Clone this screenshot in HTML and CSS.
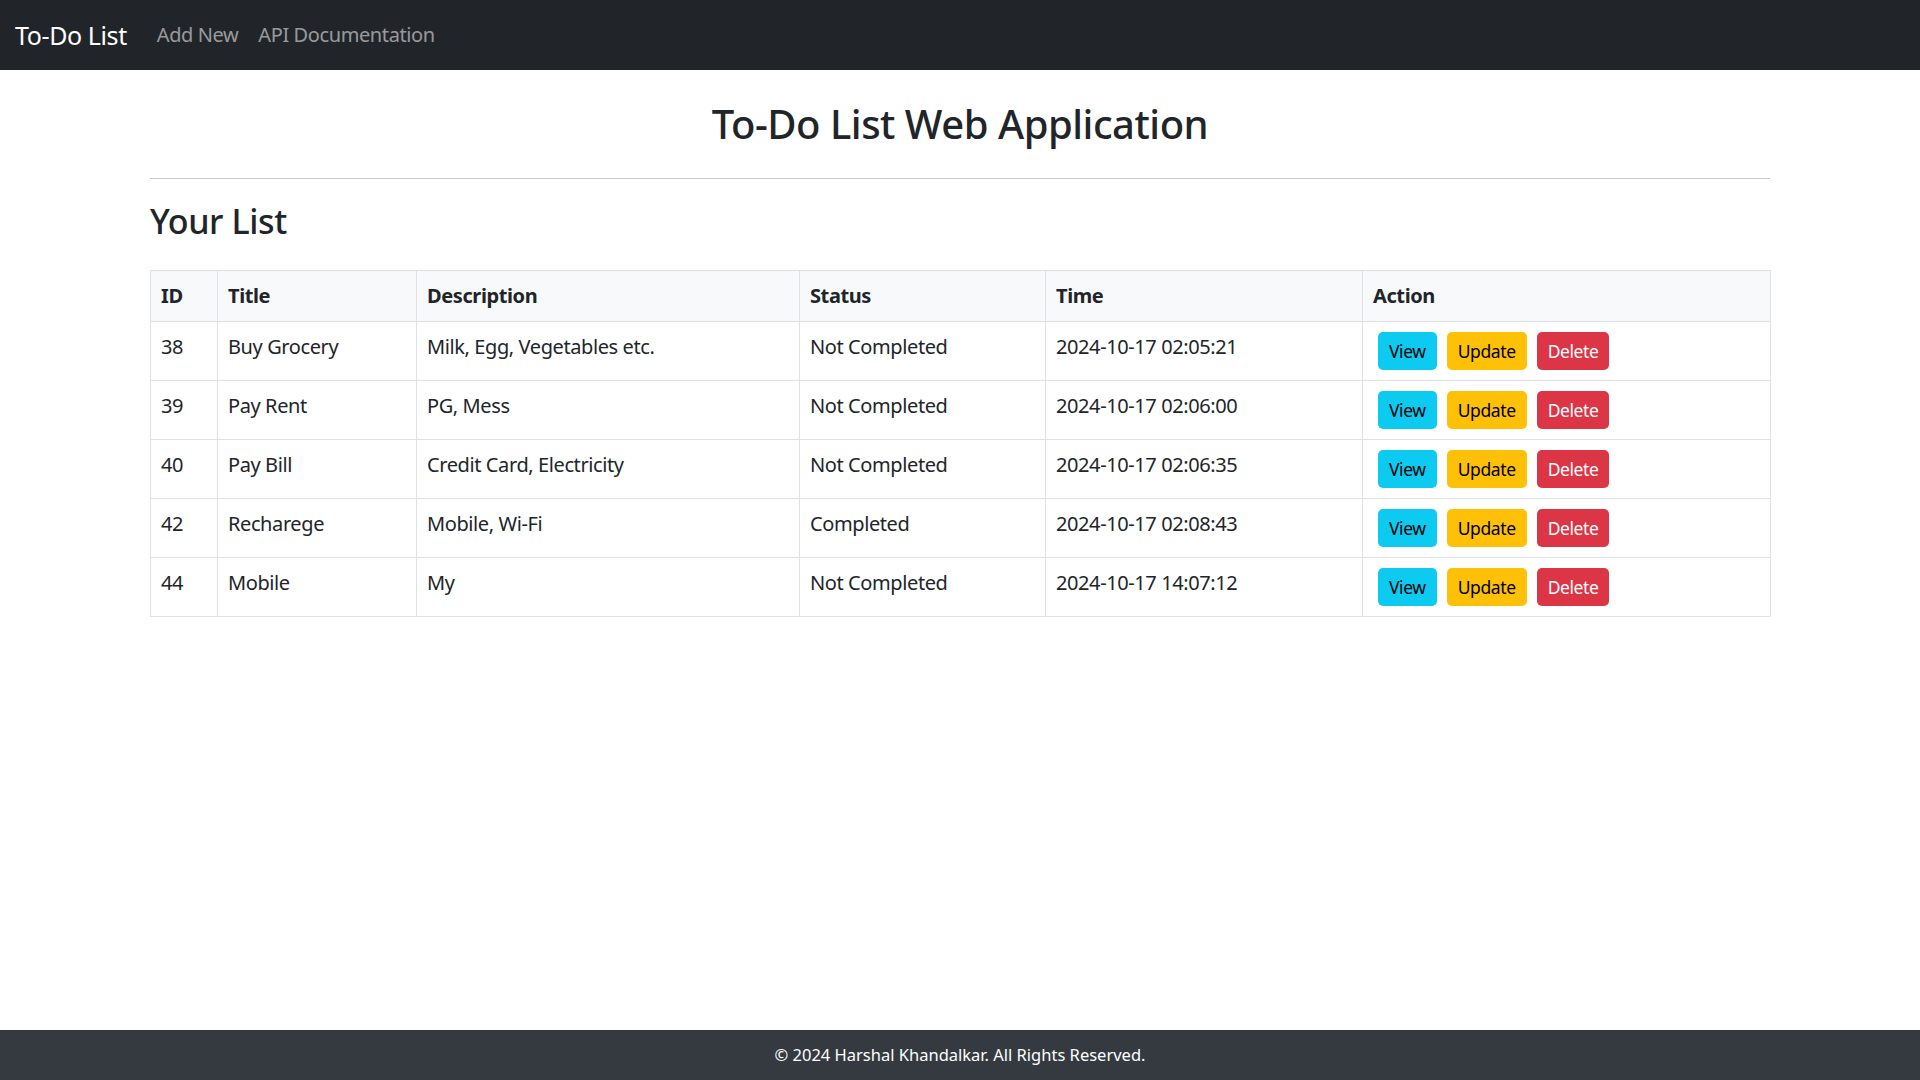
FILE: index.html
```html
<!DOCTYPE html>
<html lang="en">
<head>
<meta charset="utf-8">
<title>To-Do List</title>
<link rel="stylesheet" href="styles.css">
</head>
<body>
<nav class="navbar">
  <a class="brand" href="#">To-Do List</a>
  <a class="nav-link" href="#">Add New</a>
  <a class="nav-link" href="#">API Documentation</a>
</nav>
<main class="container">
  <h1 class="page-title">To-Do List Web Application</h1>
  <hr class="divider">
  <h3 class="section-title">Your List</h3>
  <table class="todo-table">
    <colgroup>
      <col class="c-id"><col class="c-title"><col class="c-desc"><col class="c-status"><col class="c-time"><col class="c-action">
    </colgroup>
    <thead>
      <tr><th>ID</th><th>Title</th><th>Description</th><th>Status</th><th>Time</th><th>Action</th></tr>
    </thead>
    <tbody>
      <tr><td>38</td><td>Buy Grocery</td><td>Milk, Egg, Vegetables etc.</td><td>Not Completed</td><td>2024-10-17 02:05:21</td>
        <td><div class="actions"><a class="btn btn-info" href="#">View</a><a class="btn btn-warning" href="#">Update</a><a class="btn btn-danger" href="#">Delete</a></div></td></tr>
      <tr><td>39</td><td>Pay Rent</td><td>PG, Mess</td><td>Not Completed</td><td>2024-10-17 02:06:00</td>
        <td><div class="actions"><a class="btn btn-info" href="#">View</a><a class="btn btn-warning" href="#">Update</a><a class="btn btn-danger" href="#">Delete</a></div></td></tr>
      <tr><td>40</td><td>Pay Bill</td><td>Credit Card, Electricity</td><td>Not Completed</td><td>2024-10-17 02:06:35</td>
        <td><div class="actions"><a class="btn btn-info" href="#">View</a><a class="btn btn-warning" href="#">Update</a><a class="btn btn-danger" href="#">Delete</a></div></td></tr>
      <tr><td>42</td><td>Recharege</td><td>Mobile, Wi-Fi</td><td>Completed</td><td>2024-10-17 02:08:43</td>
        <td><div class="actions"><a class="btn btn-info" href="#">View</a><a class="btn btn-warning" href="#">Update</a><a class="btn btn-danger" href="#">Delete</a></div></td></tr>
      <tr><td>44</td><td>Mobile</td><td>My</td><td>Not Completed</td><td>2024-10-17 14:07:12</td>
        <td><div class="actions"><a class="btn btn-info" href="#">View</a><a class="btn btn-warning" href="#">Update</a><a class="btn btn-danger" href="#">Delete</a></div></td></tr>
    </tbody>
  </table>
</main>
<footer class="footer">© 2024 Harshal Khandalkar. All Rights Reserved.</footer>
</body>
</html>
```
FILE: styles.css
```css
* { box-sizing: border-box; }
html, body { margin: 0; padding: 0; }
body {
  min-height: 100vh;
  display: flex;
  flex-direction: column;
  font-family: "Segoe UI", "Noto Sans", "Open Sans", sans-serif;
  font-size: 20px;
  line-height: 30px;
  letter-spacing: -0.02em;
  color: #212529;
  background: #fff;
}
a { text-decoration: none; }

.navbar {
  height: 70px;
  background: #212529;
  display: flex;
  align-items: center;
  padding: 0 15px;
}
.brand {
  color: #fff;
  font-size: 25px;
  line-height: 37px;
  margin-right: 20px;
}
.nav-link {
  color: rgba(255, 255, 255, 0.55);
  padding: 0 10px;
  font-size: 20px;
}

.container {
  width: 100%;
  max-width: 1650px;
  margin: 0 auto;
  padding: 0 15px;
  flex: 1 0 auto;
}
.page-title {
  text-align: center;
  font-size: 40px;
  line-height: 48px;
  font-weight: 500;
  letter-spacing: -0.012em;
  margin: 30px 0 30px;
}
.divider {
  border: 0;
  border-top: 1px solid rgba(33, 37, 41, 0.25);
  margin: 0 0 21px;
}
.section-title {
  font-size: 34px;
  line-height: 42px;
  font-weight: 500;
  margin: 0 0 28px;
}

.todo-table {
  width: 100%;
  border-collapse: collapse;
  table-layout: fixed;
  vertical-align: top;
}
.c-id { width: 67px; }
.c-title { width: 199px; }
.c-desc { width: 383px; }
.c-status { width: 246px; }
.c-time { width: 317px; }
.c-action { width: 408px; }
.todo-table th, .todo-table td {
  border: 1px solid #dee2e6;
  padding: 10px;
  text-align: left;
  vertical-align: top;
}
.todo-table th {
  background: #f8f9fa;
  font-weight: 700;
}

.actions {
  display: flex;
  gap: 10px;
  padding-left: 5px;
}
.btn {
  display: inline-block;
  font-size: 17.5px;
  line-height: 26px;
  padding: 5px 10px;
  border: 1px solid transparent;
  border-radius: 5px;
}
.btn-info { background: #0dcaf0; color: #000; }
.btn-warning { background: #ffc107; color: #000; }
.btn-danger { background: #dc3545; color: #fff; }

.footer {
  background: #343a40;
  color: #fff;
  text-align: center;
  font-size: 16.5px;
  letter-spacing: 0;
  padding: 10px 0;
  line-height: 30px;
}
```
